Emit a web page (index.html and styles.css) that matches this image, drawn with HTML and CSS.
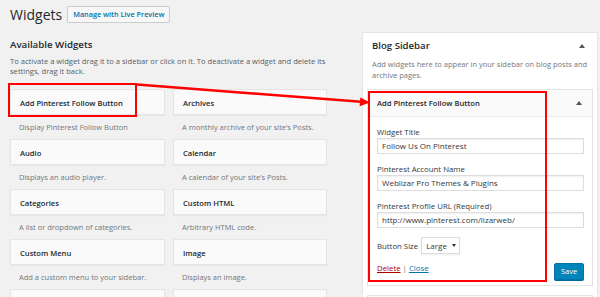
FILE: index.html
```html
<!DOCTYPE html>
<html lang="en">
<head>
<meta charset="UTF-8" />
<title>Widgets</title>
<link rel="stylesheet" href="styles.css">
</head>
<body>
<div class="page">
  <div class="heading">
    <h1>Widgets</h1>
    <a class="btn-preview">Manage with Live Preview</a>
  </div>

  <div class="columns">
    <div class="col-left">
      <h2>Available Widgets</h2>
      <p class="intro">To activate a widget drag it to a sidebar or click on it. To deactivate a widget and delete its settings, drag it back.</p>

      <div class="widget-list">
        <div class="widget-item">
          <div class="widget-top">Add Pinterest Follow Button</div>
          <div class="widget-desc">Display Pinterest Follow Button</div>
        </div>
        <div class="widget-item">
          <div class="widget-top">Archives</div>
          <div class="widget-desc">A monthly archive of your site’s Posts.</div>
        </div>
        <div class="widget-item">
          <div class="widget-top">Audio</div>
          <div class="widget-desc">Displays an audio player.</div>
        </div>
        <div class="widget-item">
          <div class="widget-top">Calendar</div>
          <div class="widget-desc">A calendar of your site’s Posts.</div>
        </div>
        <div class="widget-item">
          <div class="widget-top">Categories</div>
          <div class="widget-desc">A list or dropdown of categories.</div>
        </div>
        <div class="widget-item">
          <div class="widget-top">Custom HTML</div>
          <div class="widget-desc">Arbitrary HTML code.</div>
        </div>
        <div class="widget-item">
          <div class="widget-top">Custom Menu</div>
          <div class="widget-desc">Add a custom menu to your sidebar.</div>
        </div>
        <div class="widget-item">
          <div class="widget-top">Image</div>
          <div class="widget-desc">Displays an image.</div>
        </div>
        <div class="widget-item">
          <div class="widget-top"></div>
        </div>
        <div class="widget-item">
          <div class="widget-top"></div>
        </div>
      </div>
    </div>

    <div class="col-right">
      <div class="sidebar-box">
        <div class="sidebar-name">
          <h3>Blog Sidebar</h3>
          <span class="toggle"></span>
        </div>
        <p class="sidebar-desc">Add widgets here to appear in your sidebar on blog posts and archive pages.</p>

        <div class="widget open">
          <div class="widget-head">
            <span>Add Pinterest Follow Button</span>
            <span class="toggle"></span>
          </div>
          <div class="widget-inside">
            <p class="field">
              <label>Widget Title</label>
              <span class="input">Follow Us On Pinterest</span>
            </p>
            <p class="field">
              <label>Pinterest Account Name</label>
              <span class="input">Weblizar Pro Themes &amp; Plugins</span>
            </p>
            <p class="field">
              <label>Pinterest Profile URL (Required)</label>
              <span class="input">http://www.pinterest.com/lizarweb/</span>
            </p>
            <p class="field-inline">
              <label>Button Size</label>
              <span class="select">Large</span>
            </p>
            <div class="widget-control">
              <div class="links"><a class="delete">Delete</a> <span class="sep">|</span> <a class="close">Close</a></div>
              <span class="btn-save">Save</span>
            </div>
          </div>
        </div>

        <div class="widget">
          <div class="widget-head"></div>
        </div>
      </div>
    </div>
  </div>

  <!-- annotations drawn over the screenshot -->
  <div class="mark mark-left"></div>
  <div class="mark mark-right"></div>
  <svg class="arrow" width="600" height="297" viewBox="0 0 600 297">
    <line x1="137" y1="84.5" x2="361" y2="101.7" stroke="#f00" stroke-width="2.5" />
    <polygon points="370,102.5 360.3,97.4 359.6,106.2" fill="#f00" />
  </svg>
</div>
</body>
</html>
```

FILE: styles.css
```css
body {
  margin: 0;
  background: #f1f1f1;
  font-family: "Open Sans", "Noto Sans", sans-serif;
  font-size: 7.5px;
  color: #444;
}
.page {
  position: relative;
  width: 600px;
  height: 297px;
  overflow: hidden;
}

/* titre */
.heading {
  display: flex;
  align-items: center;
  gap: 5px;
  padding: 6px 10px 0;
  height: 17px;
}
h1 {
  margin: 0;
  font-size: 14px;
  font-weight: 400;
  line-height: 17px;
  color: #23282d;
}
.btn-preview {
  border: 1px solid #ccc;
  background: #f7f7f7;
  color: #0073aa;
  font-size: 7.3px;
  font-weight: 600;
  line-height: 15px;
  padding: 0 5px;
  border-radius: 2px;
}

.columns {
  display: flex;
  gap: 35px;
  padding: 9px 0 0 10px;
}
.col-left {
  width: 317px;
}
.col-right {
  width: 236px;
}

h2 {
  margin: 6px 0 0;
  font-size: 9.7px;
  font-weight: 600;
  line-height: 14px;
  color: #23282d;
}
.intro {
  margin: 4px 0 0;
  font-size: 7.6px;
  line-height: 10px;
  color: #555d66;
}

/* widgets disponibles */
.widget-list {
  display: grid;
  grid-template-columns: 155px 154px;
  column-gap: 8px;
  margin-top: 13px;
}
.widget-top {
  height: 26px;
  line-height: 26px;
  padding: 0 9px;
  background: #fafafa;
  border: 1px solid #e5e5e5;
  box-sizing: border-box;
  box-shadow: 0 1px 1px rgba(0, 0, 0, .04);
  font-size: 7.6px;
  font-weight: 600;
  color: #23282d;
}
.widget-desc {
  padding: 7px 9px;
  line-height: 10px;
  color: #72777c;
}

/* sidebar */
.sidebar-box {
  background: #fff;
  border: 1px solid #e5e5e5;
  padding: 0 4px;
  box-shadow: 0 1px 1px rgba(0, 0, 0, .04);
}
.sidebar-name {
  display: flex;
  justify-content: space-between;
  align-items: center;
  padding: 6px 8px 0 5px;
}
h3 {
  margin: 0;
  font-size: 9.6px;
  font-weight: 600;
  line-height: 14px;
  color: #23282d;
}
.toggle {
  width: 0;
  height: 0;
  border-left: 3px solid transparent;
  border-right: 3px solid transparent;
  border-bottom: 4px solid #555;
}
.sidebar-desc {
  margin: 6px 0 0;
  padding: 0 5px;
  line-height: 10.5px;
  color: #72777c;
}

.widget {
  border: 1px solid #e5e5e5;
  background: #fff;
  margin-top: 9px;
}
.widget-head {
  display: flex;
  justify-content: space-between;
  align-items: center;
  height: 26px;
  padding: 0 10px 0 9px;
  background: #fafafa;
  font-size: 7.6px;
  font-weight: 600;
  color: #23282d;
}
.widget.open .widget-head {
  border-bottom: 1px solid #eee;
}
.widget-inside {
  padding: 10px 8px 5px 9px;
}
.field {
  margin: 0 0 10px;
}
.field label,
.field-inline label {
  display: block;
  font-size: 7.8px;
  line-height: 10px;
  color: #32373c;
}
.input {
  display: block;
  margin-top: 1px;
  height: 16px;
  line-height: 14px;
  padding: 0 4px;
  border: 1px solid #ddd;
  box-sizing: border-box;
  box-shadow: inset 0 1px 2px rgba(0, 0, 0, .07);
  font-size: 8px;
  color: #32373c;
}
.field-inline {
  display: flex;
  align-items: center;
  gap: 3px;
  margin: -1px 0 9px;
}
.select {
  display: flex;
  align-items: center;
  gap: 5px;
  width: 39px;
  height: 17px;
  padding: 0 4px;
  box-sizing: border-box;
  border: 1px solid #ddd;
  box-shadow: 0 1px 2px rgba(0, 0, 0, .07);
  font-size: 8px;
  color: #32373c;
}
.select::after {
  content: "";
  border-left: 2px solid transparent;
  border-right: 2px solid transparent;
  border-top: 3px solid #333;
}
.widget-control {
  display: flex;
  justify-content: space-between;
  align-items: flex-start;
}
.links {
  font-size: 7.8px;
  line-height: 10px;
}
.delete {
  color: #a00;
  text-decoration: underline;
}
.sep {
  color: #72777c;
}
.close {
  color: #0073aa;
  text-decoration: underline;
}
.btn-save {
  width: 30px;
  height: 17px;
  line-height: 15px;
  text-align: center;
  box-sizing: border-box;
  background: #0085ba;
  border: 1px solid #0073aa;
  border-radius: 2px;
  box-shadow: 0 1px 0 #006799;
  color: #fff;
  font-size: 7.5px;
}

/* cadres rouges + flèche */
.mark {
  position: absolute;
  border: 2px solid #f00;
  box-sizing: border-box;
}
.mark-left {
  left: 8px;
  top: 83px;
  width: 129px;
  height: 34px;
}
.mark-right {
  left: 368px;
  top: 91px;
  width: 179px;
  height: 191px;
}
.arrow {
  position: absolute;
  left: 0;
  top: 0;
  pointer-events: none;
}
```
